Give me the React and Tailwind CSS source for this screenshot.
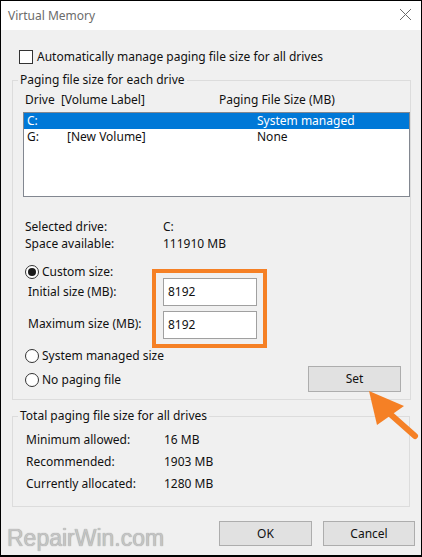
import React from "react";

const font = { fontFamily: '"Noto Sans", "Open Sans", sans-serif' };

function Radio({ checked }) {
  return (
    <span className="relative inline-flex h-[14px] w-[14px] shrink-0 items-center justify-center rounded-full border border-[#333] bg-white">
      {checked && <span className="h-[8px] w-[8px] rounded-full bg-[#1a1a1a]" />}
    </span>
  );
}

function Btn({ children, className = "" }) {
  return (
    <div
      className={
        "flex items-center justify-center border border-[#adadad] bg-[#e1e1e1] text-[12px] text-[#111] " +
        className
      }
    >
      {children}
    </div>
  );
}

export default function App() {
  return (
    <div
      className="relative flex h-[557px] w-[422px] flex-col overflow-hidden border border-b-2 border-black bg-[#f0f0f0] text-[12px] text-[#111]"
      style={font}
    >
      {/* title bar */}
      <div className="flex h-[29px] shrink-0 items-center justify-between bg-white pl-[7px] pr-[9px]">
        <span className="text-[12px] text-[#6b6b6b]">Virtual Memory</span>
        <svg width="13" height="13" viewBox="0 0 13 13" className="mt-[-2px]">
          <path d="M1 1 L12 12 M12 1 L1 12" stroke="#6b6b6b" strokeWidth="1" fill="none" />
        </svg>
      </div>

      {/* body */}
      <div className="flex flex-1 flex-col pt-[19px]">
        <div className="flex h-[16px] items-center pl-[18px]">
          <span className="h-[14px] w-[14px] border border-[#333] bg-white" />
          <span className="ml-[4px] leading-[16px]">Automatically manage paging file size for all drives</span>
        </div>

        <fieldset className="ml-[11px] mt-[7px] w-[398px] border border-[#dcdcdc] pb-[7px]">
          <legend className="ml-[5px] px-[2px] leading-[16px]">Paging file size for each drive</legend>
          <div className="mt-[4px] flex h-[16px] items-center pl-[12px] leading-[16px]">
            <span className="w-[194px]">Drive&nbsp;&nbsp;[Volume Label]</span>
            <span>Paging File Size (MB)</span>
          </div>
          <div className="ml-[10px] mt-[4px] h-[85px] w-[387px] border border-[#828790] bg-white">
            <div className="flex h-[16px] items-center bg-[#0078d7] pl-[3px] text-white">
              <span className="w-[40px]">C:</span>
              <span className="w-[190px]"></span>
              <span>System managed</span>
            </div>
            <div className="flex h-[16px] items-center pl-[3px]">
              <span className="w-[40px]">G:</span>
              <span className="w-[190px]">[New Volume]</span>
              <span>None</span>
            </div>
          </div>

          <div className="mt-[21px] pl-[12px] leading-[17px]">
            <div className="flex">
              <span className="w-[138px]">Selected drive:</span>
              <span>C:</span>
            </div>
            <div className="flex">
              <span className="w-[138px]">Space available:</span>
              <span>111910 MB</span>
            </div>
          </div>

          <div className="mt-[12px] flex items-start">
            <div className="flex w-[139px] flex-col">
              <div className="flex h-[16px] items-center gap-[3px] pl-[12px]">
                <Radio checked />
                <span className="leading-[16px]">Custom size:</span>
              </div>
              <div className="mt-[4px] h-[16px] pl-[15px] leading-[16px]">Initial size (MB):</div>
              <div className="mt-[16px] h-[16px] pl-[15px] leading-[16px]">Maximum size (MB):</div>
            </div>
            <div className="mt-[5px] flex h-[79px] w-[115px] flex-col gap-[5px] border-[4px] border-[#f58025] pl-[7px] pt-[5px]">
              <div className="flex h-[28px] w-[94px] items-center border border-[#a0a0a0] bg-white pl-[4px]">8192</div>
              <div className="flex h-[28px] w-[94px] items-center border border-[#a0a0a0] bg-white pl-[4px]">8192</div>
            </div>
          </div>

          <div className="flex items-start justify-between">
            <div className="flex flex-col gap-[8px] pl-[12px]">
              <div className="flex h-[16px] items-center gap-[3px]">
                <Radio />
                <span className="leading-[16px]">System managed size</span>
              </div>
              <div className="flex h-[16px] items-center gap-[3px]">
                <Radio />
                <span className="leading-[16px]">No paging file</span>
              </div>
            </div>
            <Btn className="mr-[9px] mt-[18px] h-[26px] w-[93px]">Set</Btn>
          </div>
        </fieldset>

        <fieldset className="ml-[11px] mt-[8px] w-[398px] border border-[#dcdcdc] pb-[11px]">
          <legend className="ml-[5px] px-[2px] leading-[16px]">Total paging file size for all drives</legend>
          <div className="mt-[5px] pl-[13px] leading-[22px]">
            <div className="flex">
              <span className="w-[138px]">Minimum allowed:</span>
              <span>16 MB</span>
            </div>
            <div className="flex">
              <span className="w-[138px]">Recommended:</span>
              <span>1903 MB</span>
            </div>
            <div className="flex">
              <span className="w-[138px]">Currently allocated:</span>
              <span>1280 MB</span>
            </div>
          </div>
        </fieldset>

        <div className="mt-[14px] flex items-start justify-between">
          <span
            className="ml-[6px] mt-[4px] text-[23px] leading-[26px] text-[#c4c4c4]"
            style={{ fontFamily: '"Liberation Sans", Arial, sans-serif', textShadow: "0 0 1px #8a8a8a" }}
          >
            RepairWin.com
          </span>
          <div className="mr-[6px] flex gap-[11px]">
            <Btn className="h-[25px] w-[93px]">OK</Btn>
            <Btn className="h-[25px] w-[92px]">Cancel</Btn>
          </div>
        </div>
      </div>

      {/* annotation arrow */}
      <svg className="pointer-events-none absolute left-[360px] top-[384px]" width="62" height="60" viewBox="360 384 62 60">
        <polygon points="368,390 403,405 376,424" fill="#f58025" />
        <line x1="388" y1="412" x2="414" y2="435" stroke="#f58025" strokeWidth="6" strokeLinecap="round" />
      </svg>
    </div>
  );
}
